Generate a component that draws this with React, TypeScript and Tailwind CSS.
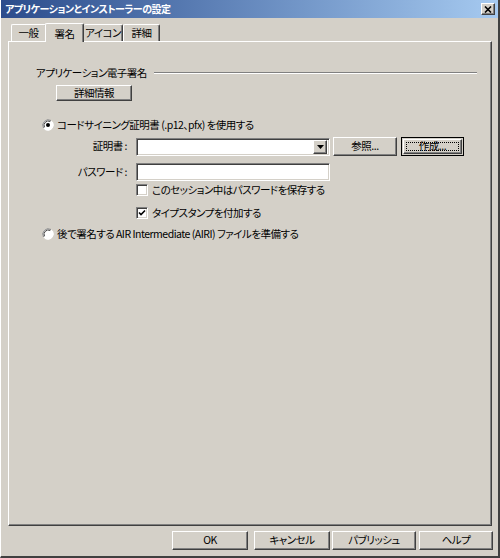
import React from 'react'

const raised =
  'bg-[#d4d0c8] border border-t-white border-l-white border-r-[#404040] border-b-[#404040] shadow-[inset_-1px_-1px_0_#808080]'
const sunken =
  'bg-white border border-t-[#808080] border-l-[#808080] border-r-white border-b-white shadow-[inset_1px_1px_0_#404040,inset_-1px_-1px_0_#d4d0c8]'

function Btn({ label, className = '' }: { label: string; className?: string }) {
  return (
    <div className={`${raised} flex items-center justify-center leading-none ${className}`}>
      {label}
    </div>
  )
}

function Radio({ checked }: { checked?: boolean }) {
  return (
    <svg width="12" height="12" viewBox="0 0 12 12" className="shrink-0">
      <circle cx="6" cy="6" r="5.5" fill="#fff" />
      <path d="M1.5 9 A5.5 5.5 0 0 1 9 1.5" stroke="#808080" strokeWidth="1" fill="none" />
      <path d="M2.5 8.3 A4.3 4.3 0 0 1 8.3 2.5" stroke="#404040" strokeWidth="1" fill="none" />
      <path d="M10.5 3 A5.5 5.5 0 0 1 3 10.5" stroke="#fff" strokeWidth="1" fill="none" />
      {checked && <circle cx="6" cy="6" r="2" fill="#000" />}
    </svg>
  )
}

function Check({ checked }: { checked?: boolean }) {
  return (
    <div className={`${sunken} w-[12px] h-[12px] shrink-0 flex items-center justify-center`}>
      {checked && (
        <svg width="8" height="8" viewBox="0 0 8 8">
          <path d="M1 3.5 L3 5.5 L7 1.5" stroke="#000" strokeWidth="1.6" fill="none" />
        </svg>
      )}
    </div>
  )
}

export default function App() {
  return (
    <div className="w-[500px] h-[558px] bg-[#d4d0c8] flex flex-col whitespace-nowrap border-l border-l-white border-r-2 border-r-[#404040] border-b-2 border-b-[#404040] font-['Noto_Sans_CJK_JP',sans-serif] text-[10.5px] tracking-[-0.5px] text-black [font-feature-settings:'palt']">
      {/* title bar */}
      <div className="h-[18px] flex items-center justify-between pl-[4px] pr-[3px] bg-gradient-to-r from-[#2c4c8c] to-[#a6caf0]">
        <span className="text-white font-bold text-[10px] leading-none">アプリケーションとインストーラーの設定</span>
        <div className={`${raised} w-[14px] h-[12px] flex items-center justify-center`}>
          <svg width="8" height="7" viewBox="0 0 8 7">
            <path d="M1 0.5 L7 6.5 M7 0.5 L1 6.5" stroke="#000" strokeWidth="1.6" />
          </svg>
        </div>
      </div>

      {/* tabs */}
      <div className="flex items-end h-[19px] mt-[5px] pl-[10px] relative z-10">
        <div className="h-[17px] w-[35px] flex items-center justify-center border-t border-l border-t-white border-l-white border-r border-r-[#404040] rounded-t-[2px] mb-[1px]">一般</div>
        <div className="h-[19px] w-[39px] -ml-[1px] flex items-start pt-[2px] justify-center bg-[#d4d0c8] border-t border-l border-t-white border-l-white border-r border-r-[#404040] shadow-[inset_-1px_0_0_#808080] rounded-t-[2px]">署名</div>
        <div className="h-[17px] w-[39px] flex items-center justify-center border-t border-r border-t-white border-r-[#404040] shadow-[inset_-1px_0_0_#808080] rounded-t-[2px] mb-[1px]">アイコン</div>
        <div className="h-[17px] w-[37px] flex items-center justify-center border-t border-l border-r border-t-white border-l-white border-r-[#404040] shadow-[inset_-1px_0_0_#808080] rounded-t-[2px] mb-[1px]">詳細</div>
      </div>

      {/* panel */}
      <div className="ml-[7px] w-[484px] h-[485px] -mt-[1px] border border-t-white border-l-white border-r-[#404040] border-b-[#404040] shadow-[inset_-1px_-1px_0_#808080] flex flex-col">
        <div className="mt-[25px] h-[12px] flex items-center pl-[27px] pr-[14px] gap-[7px]">
          <span className="leading-none">アプリケーション電子署名</span>
          <div className="flex-1 h-[2px] border-t border-t-[#808080] border-b border-b-white" />
        </div>

        <Btn label="詳細情報" className="ml-[47px] mt-[6px] w-[76px] h-[16px]" />

        <div className="mt-[18px] h-[12px] flex items-center pl-[33px] gap-[3px]">
          <Radio checked />
          <span className="leading-none">コードサイニング証明書 (.p12、pfx) を使用する</span>
        </div>

        <div className="mt-[6px] h-[19px] flex items-center">
          <div className="w-[118px] text-right leading-none">証明書 :</div>
          <div className={`${sunken} ml-[9px] w-[194px] h-[18px] flex justify-end items-center pr-[2px]`}>
            <div className={`${raised} w-[14px] h-[14px] flex items-center justify-center`}>
              <svg width="7" height="4" viewBox="0 0 7 4">
                <path d="M0 0 H7 L3.5 4 Z" fill="#000" />
              </svg>
            </div>
          </div>
          <Btn label="参照..." className="ml-[3px] w-[64px] h-[19px]" />
          <div className="ml-[4px] w-[63px] h-[19px] border border-black p-[1px]">
            <div className={`${raised} w-full h-full flex items-center justify-center p-[2px]`}>
              <div className="w-full h-full border border-dotted border-black flex items-center justify-center leading-none">作成...</div>
            </div>
          </div>
        </div>

        <div className="mt-[7px] h-[18px] flex items-center">
          <div className="w-[118px] text-right leading-none">パスワード :</div>
          <div className={`${sunken} ml-[9px] w-[194px] h-[18px]`} />
        </div>

        <div className="mt-[3px] h-[12px] flex items-center pl-[127px] gap-[4px]">
          <Check />
          <span className="leading-none">このセッション中はパスワードを保存する</span>
        </div>

        <div className="mt-[11px] h-[12px] flex items-center pl-[127px] gap-[4px]">
          <Check checked />
          <span className="leading-none">タイプスタンプを付加する</span>
        </div>

        <div className="mt-[9px] h-[12px] flex items-center pl-[33px] gap-[3px]">
          <Radio />
          <span className="leading-none">後で署名する AIR Intermediate (AIRI) ファイルを準備する</span>
        </div>
      </div>

      {/* bottom buttons */}
      <div className="mt-[5px] flex pl-[171px]">
        <Btn label="OK" className="w-[76px] h-[19px]" />
        <Btn label="キャンセル" className="ml-[6px] w-[76px] h-[19px]" />
        <Btn label="パブリッシュ" className="ml-[2px] w-[84px] h-[19px]" />
        <Btn label="ヘルプ" className="ml-[3px] w-[74px] h-[19px]" />
      </div>
    </div>
  )
}
